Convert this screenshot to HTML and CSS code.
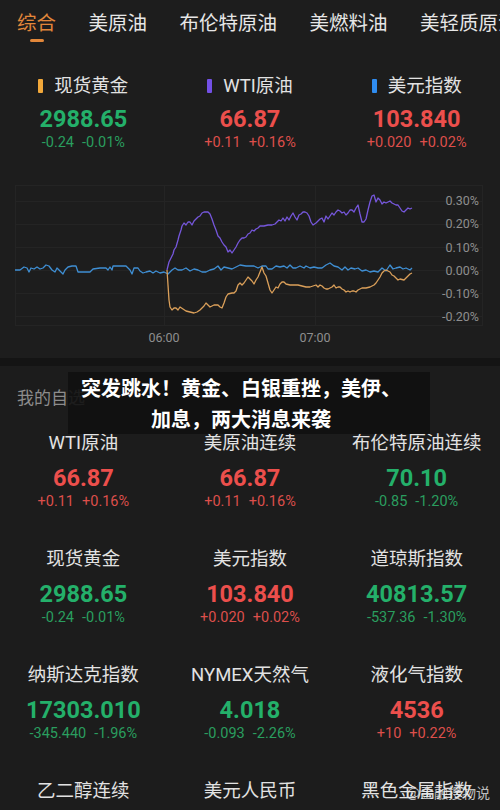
FILE: index.html
```html
<!DOCTYPE html>
<html lang="zh-CN">
<head>
<meta charset="utf-8">
<title>行情</title>
<link rel="stylesheet" href="styles.css">
</head>
<body>
<div class="app">
  <nav class="tabs">
    <div class="tab active"><span class="tab-text">综合</span><i class="tab-bar"></i></div>
    <div class="tab"><span class="tab-text">美原油</span></div>
    <div class="tab"><span class="tab-text">布伦特原油</span></div>
    <div class="tab"><span class="tab-text">美燃料油</span></div>
    <div class="tab"><span class="tab-text">美轻质原油</span></div>
  </nav>

  <section class="top">
    <div class="summary">
      <div class="quote">
        <div class="label"><i class="mark mark-gold"></i><span>现货黄金</span></div>
        <div class="value down">2988.65</div>
        <div class="chg down"><span>-0.24</span><span>-0.01%</span></div>
      </div>
      <div class="quote">
        <div class="label"><i class="mark mark-oil"></i><span>WTI原油</span></div>
        <div class="value up">66.87</div>
        <div class="chg up"><span>+0.11</span><span>+0.16%</span></div>
      </div>
      <div class="quote">
        <div class="label"><i class="mark mark-usd"></i><span>美元指数</span></div>
        <div class="value up">103.840</div>
        <div class="chg up"><span>+0.020</span><span>+0.02%</span></div>
      </div>
    </div>

    <svg class="chart" width="500" height="180" viewBox="0 170 500 180" xmlns="http://www.w3.org/2000/svg">
      <g class="grid-lines" stroke="#242424" stroke-width="1" fill="none">
        <line x1="15" y1="185.5" x2="482" y2="185.5"/>
        <line x1="15" y1="201.5" x2="482" y2="201.5"/>
        <line x1="15" y1="224.5" x2="482" y2="224.5"/>
        <line x1="15" y1="247.5" x2="482" y2="247.5"/>
        <line x1="15" y1="270.5" x2="482" y2="270.5"/>
        <line x1="15" y1="293.5" x2="482" y2="293.5"/>
        <line x1="15" y1="316.5" x2="482" y2="316.5"/>
        <line x1="15" y1="325.5" x2="482" y2="325.5"/>
        <line x1="15.5" y1="185" x2="15.5" y2="326"/>
        <line x1="164.5" y1="185" x2="164.5" y2="326"/>
        <line x1="315.5" y1="185" x2="315.5" y2="326"/>
        <line x1="482.5" y1="185" x2="482.5" y2="326"/>
      </g>
      <polyline fill="none" stroke="#3f8fd4" stroke-width="1.3" stroke-linejoin="round" points="15,270 20,270 24,267 27,268 29,272 31,268 34,269 37,267 40,269 43,268 46,265 49,266 52,270 55,272 57,268 60,271 63,274 65,270 68,267 72,266 76,266 78,272 82,272 90,272 93,269 100,268 106,268 108,270 110,267 112,270 113,266 120,266 126,266 130,270 132,274 134,268 138,268 140,271 143,273 146,272 150,271 153,273 156,271 160,273 164,272 168,274 172,270 175,268 178,270 182,270 186,268 190,271 194,269 198,270 202,272 206,272 210,270 214,269 218,266 221,270 224,267 228,268 232,269 236,267 240,265 246,266 250,266 254,266 258,268 262,266 266,266 268,269 272,269 276,266 280,267 284,266 287,268 290,265 293,268 296,268 300,266 304,268 306,266 310,268 314,267 318,268 322,268 326,265 330,263 334,266 338,267 342,270 345,267 348,270 351,268 355,269 358,268 362,271 366,270 370,272 374,271 378,272 382,268 386,271 390,265 393,269 396,268 400,267 403,269 406,268 410,270 412,268"/>
      <polyline fill="none" stroke="#7657dc" stroke-width="1.3" stroke-linejoin="round" points="167,270 169,262 171,258 173,254 174,250 176,247 178,240 179,236 181,230 182,226 184,223 186,225 188,222 190,222 192,225 194,221 196,219 198,217 200,216 202,213 204,212 206,212 208,212 210,214 212,219 214,225 216,230 218,236 220,238 222,242 224,245 226,247 228,252 230,250 232,253 234,250 236,247 238,243 240,240 242,238 244,238 246,237 248,234 250,233 252,230 254,231 256,229 258,228 260,226 264,226 268,225 272,225 275,224 277,222 279,220 281,221 283,218 285,221 287,217 289,220 291,216 293,213 295,217 297,220 299,215 301,214 303,212 305,212 307,213 309,216 311,222 313,225 316,223 318,221 320,219 322,218 324,222 326,216 328,219 330,216 332,213 334,215 336,212 338,210 340,211 342,213 344,212 346,215 348,213 350,210 352,210 354,212 356,208 358,205 360,214 362,222 364,222 366,219 368,210 370,202 372,196 374,195 376,202 378,198 380,200 382,204 384,202 386,203 388,202 390,201 392,203 394,204 396,205 398,205 400,208 402,211 404,212 406,210 408,208 410,209 412,208"/>
      <polyline fill="none" stroke="#dba05a" stroke-width="1.3" stroke-linejoin="round" points="167,270 168,285 169,300 170,307 172,310 174,308 176,308 178,310 180,307 183,309 186,311 190,312 194,313 197,312 200,310 202,308 204,306 206,303 208,305 210,307 212,306 214,305 216,305 218,305 220,307 222,308 224,303 226,297 228,294 232,293 234,293 236,291 238,285 240,283 242,285 244,283 246,280 248,277 250,279 252,281 254,284 256,280 258,277 260,272 262,267 264,273 266,276 268,283 270,290 272,293 274,290 276,287 278,288 280,284 282,282 284,282 286,284 290,285 294,285 298,285 302,286 306,287 310,287 313,286 316,285 318,287 320,285 322,286 324,288 326,289 328,289 330,288 332,287 334,285 336,288 338,287 340,287 342,289 344,290 346,292 348,291 350,292 352,291 354,291 356,292 358,290 362,288 366,288 370,287 374,285 376,283 378,280 380,277 382,273 384,271 386,270 388,271 390,272 392,275 394,276 396,278 398,280 400,279 404,280 406,278 408,276 410,274 412,273"/>
      <g class="axis" fill="#8e8e8e" font-size="12.5" text-anchor="end">
        <text x="479" y="205">0.30%</text>
        <text x="479" y="228">0.20%</text>
        <text x="479" y="252">0.10%</text>
        <text x="479" y="275">0.00%</text>
        <text x="479" y="298">-0.10%</text>
        <text x="479" y="321">-0.20%</text>
      </g>
      <g class="axis" fill="#8e8e8e" font-size="12.5" text-anchor="middle">
        <text x="164" y="342">06:00</text>
        <text x="315" y="342">07:00</text>
      </g>
    </svg>
  </section>

  <div class="band"></div>

  <section class="watch">
    <h2 class="watch-title">我的自选</h2>
    <div class="grid">
      <div class="item"><div class="name">WTI原油</div><div class="value up">66.87</div><div class="chg up"><span>+0.11</span><span>+0.16%</span></div></div>
      <div class="item"><div class="name">美原油连续</div><div class="value up">66.87</div><div class="chg up"><span>+0.11</span><span>+0.16%</span></div></div>
      <div class="item"><div class="name">布伦特原油连续</div><div class="value down">70.10</div><div class="chg down"><span>-0.85</span><span>-1.20%</span></div></div>

      <div class="item"><div class="name">现货黄金</div><div class="value down">2988.65</div><div class="chg down"><span>-0.24</span><span>-0.01%</span></div></div>
      <div class="item"><div class="name">美元指数</div><div class="value up">103.840</div><div class="chg up"><span>+0.020</span><span>+0.02%</span></div></div>
      <div class="item"><div class="name">道琼斯指数</div><div class="value down">40813.57</div><div class="chg down"><span>-537.36</span><span>-1.30%</span></div></div>

      <div class="item"><div class="name">纳斯达克指数</div><div class="value down">17303.010</div><div class="chg down"><span>-345.440</span><span>-1.96%</span></div></div>
      <div class="item"><div class="name">NYMEX天然气</div><div class="value down">4.018</div><div class="chg down"><span>-0.093</span><span>-2.26%</span></div></div>
      <div class="item"><div class="name">液化气指数</div><div class="value up">4536</div><div class="chg up"><span>+10</span><span>+0.22%</span></div></div>

      <div class="item"><div class="name">乙二醇连续</div></div>
      <div class="item"><div class="name">美元人民币</div></div>
      <div class="item"><div class="name">黑色金属指数</div></div>
    </div>

    <div class="caption">突发跳水！黄金、白银重挫，美伊、<br>加息，两大消息来袭</div>
    <div class="watermark">@金融搜物说</div>
  </section>
</div>
</body>
</html>
```

FILE: styles.css
```css
* { box-sizing: border-box; }

html, body {
  margin: 0;
  padding: 0;
  background: #1c1c1c;
}

body {
  width: 500px;
  height: 810px;
  overflow: hidden;
  font-family: Roboto, "Noto Sans CJK SC", sans-serif;
  color: #e4e4e4;
}

.app {
  width: 500px;
}

/* tabs */
.tabs {
  display: flex;
  gap: 32.5px;
  height: 52px;
  padding: 9px 0 0 17px;
  overflow: hidden;
  background: #1d1d1d;
}

.tab {
  display: flex;
  flex-direction: column;
  align-items: center;
  flex-shrink: 0;
}

.tab-text {
  font-family: "Noto Sans CJK SC", sans-serif;
  font-size: 19.5px;
  line-height: 26px;
  color: #e6e6e6;
  white-space: nowrap;
}

.tab.active .tab-text { color: #e2873a; }

.tab-bar {
  display: block;
  width: 14px;
  height: 3px;
  margin-top: 4px;
  border-radius: 2px;
  background: #e2873a;
}

/* top section */
.top {
  background: #1d1d1d;
  padding: 22px 0 8px;
}

.summary {
  display: grid;
  grid-template-columns: repeat(3, 1fr);
}

.quote, .item {
  display: flex;
  flex-direction: column;
  align-items: center;
}

.label {
  display: flex;
  align-items: center;
  gap: 11px;
  font-size: 18.5px;
  line-height: 24px;
  color: #e2e2e2;
}

.mark {
  display: block;
  width: 5px;
  height: 14px;
  border-radius: 1px;
}
.mark-gold { background: #f2a83a; }
.mark-oil { background: #7350e6; }
.mark-usd { background: #2f8cf0; }

.value {
  font-family: Roboto, sans-serif;
  font-weight: 700;
  font-size: 23.5px;
  line-height: 28px;
  margin-top: 7px;
}

.chg {
  display: flex;
  gap: 8px;
  font-family: Roboto, sans-serif;
  font-size: 14.5px;
  line-height: 20px;
}

.value.up { color: #ec4f4c; }
.value.down { color: #24b06a; }
.chg.up { color: #dd4f4b; }
.chg.down { color: #2a9e5f; }

.chart {
  display: block;
  margin-top: 17px;
  font-family: Roboto, sans-serif;
}

.band {
  height: 8px;
  background: #141414;
}

/* watch list */
.watch {
  position: relative;
  background: #1c1c1c;
  padding-top: 19px;
}

.watch-title {
  margin: 0 0 22px 17px;
  font-family: "Noto Sans CJK SC", sans-serif;
  font-weight: 400;
  font-size: 17px;
  line-height: 24px;
  color: #8c8c8c;
}

.grid {
  display: grid;
  grid-template-columns: repeat(3, 1fr);
  row-gap: 35px;
}

.item .value { margin-top: 9px; }

.name {
  font-size: 18.5px;
  line-height: 24px;
  color: #e2e2e2;
  white-space: nowrap;
}

.caption {
  position: absolute;
  left: 68px;
  top: 6px;
  width: 362px;
  height: 62px;
  padding-right: 16px;
  background: rgba(17, 17, 17, 0.9);
  font-family: "Noto Sans CJK SC", sans-serif;
  font-weight: 700;
  font-size: 20px;
  line-height: 31px;
  color: #ffffff;
  text-align: center;
}

.watermark {
  position: absolute;
  right: 10px;
  top: 416px;
  font-family: "Noto Sans CJK SC", sans-serif;
  font-size: 14px;
  line-height: 20px;
  color: rgba(235, 235, 235, 0.8);
}
```
